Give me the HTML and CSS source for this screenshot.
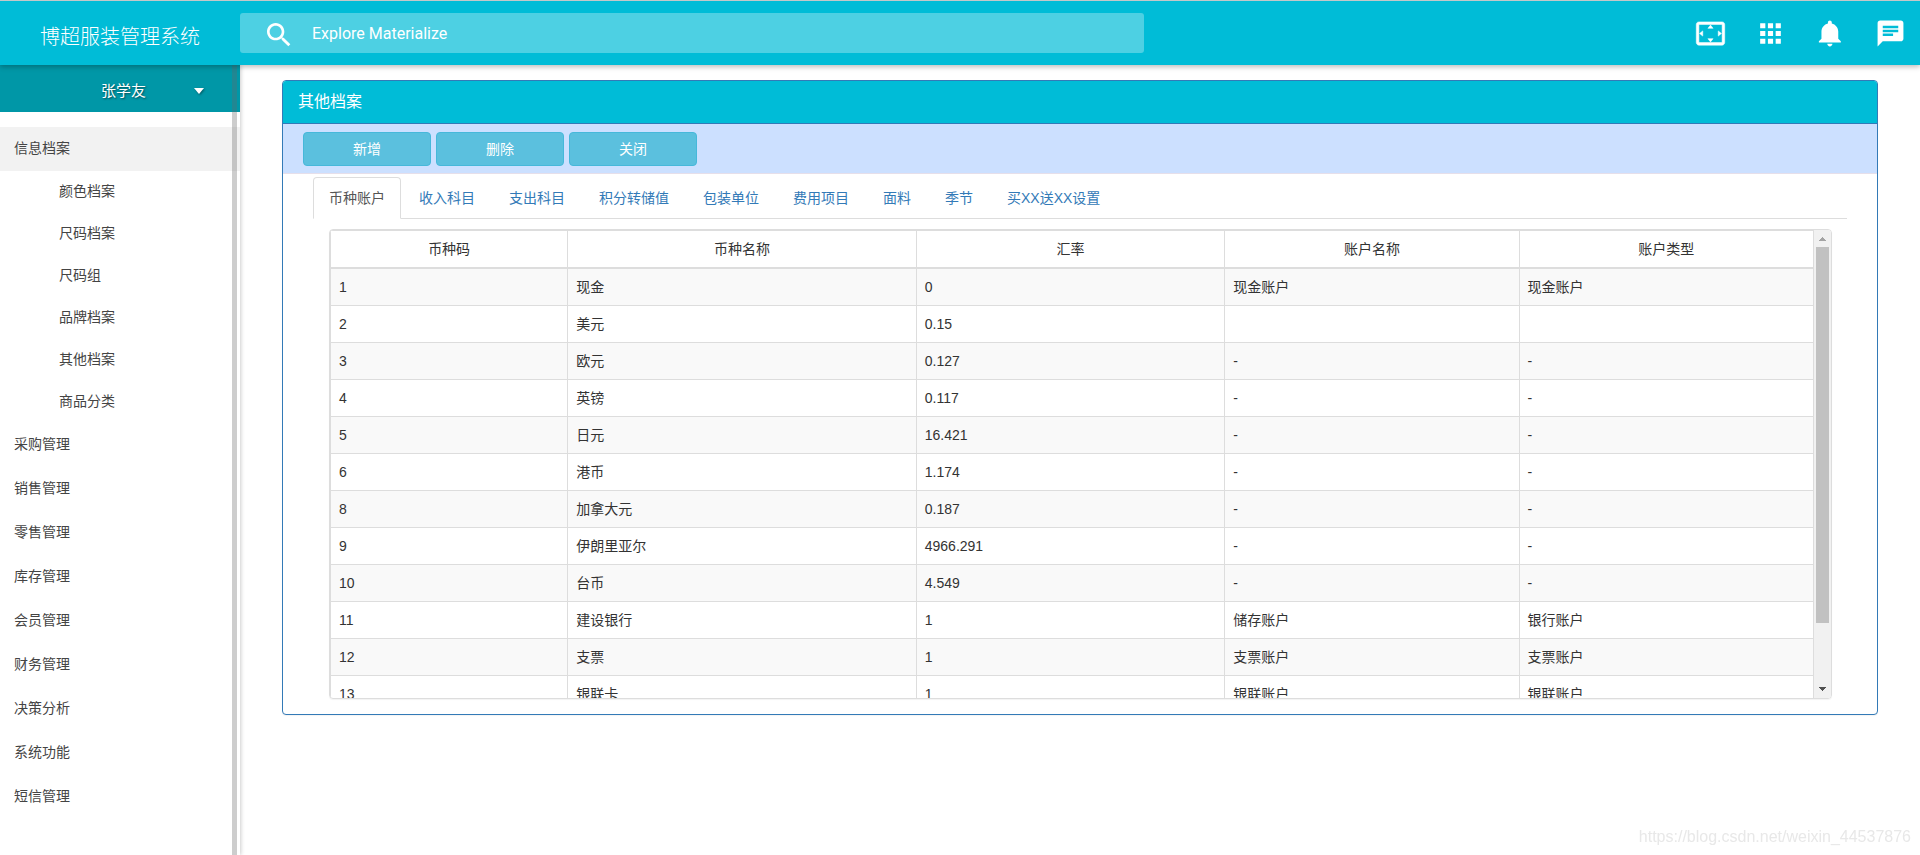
FILE: index.html
```html
<!DOCTYPE html>
<html lang="zh-CN">
<head>
<meta charset="utf-8">
<title>博超服装管理系统</title>
<link rel="stylesheet" href="styles.css">
</head>
<body>
<header class="topbar">
  <a class="brand" href="#">博超服装管理系统</a>
  <form class="search">
    <svg class="search-icon" viewBox="0 0 24 24" aria-hidden="true"><path d="M15.5 14h-.79l-.28-.27C15.41 12.59 16 11.11 16 9.5 16 5.91 13.09 3 9.5 3S3 5.91 3 9.5 5.91 16 9.5 16c1.61 0 3.09-.59 4.23-1.57l.27.28v.79l5 4.99L20.49 19l-4.99-5zm-6 0C7.01 14 5 11.99 5 9.5S7.01 5 9.5 5 14 7.01 14 9.5 11.99 14 9.5 14z"/></svg>
    <input class="search-input" type="text" placeholder="Explore Materialize" aria-label="Explore Materialize">
  </form>
  <nav class="actions">
    <button class="action" type="button" aria-label="全屏"><svg class="overscan" viewBox="0 0 24 24"><path d="M12.01 5.5L10 8h4l-1.99-2.5zM18 10v4l2.5-1.99L18 10zM6 10l-2.5 2.01L6 14v-4zm8 6h-4l2.01 2.5L14 16zm7-13H3c-1.1 0-2 .9-2 2v14c0 1.1.9 2 2 2h18c1.1 0 2-.9 2-2V5c0-1.1-.9-2-2-2zm0 16.01H3V4.99h18v14.02z"/></svg></button>
    <button class="action" type="button" aria-label="应用"><svg viewBox="0 0 24 24"><path d="M4 8h4V4H4v4zm6 12h4v-4h-4v4zm-6 0h4v-4H4v4zm0-6h4v-4H4v4zm6 0h4v-4h-4v4zm6-10v4h4V4h-4zm-6 4h4V4h-4v4zm6 6h4v-4h-4v4zm0 6h4v-4h-4v4z"/></svg></button>
    <button class="action" type="button" aria-label="通知"><svg viewBox="0 0 24 24"><path d="M11.5 22c1.1 0 2-.9 2-2h-4c0 1.1.9 2 2 2zm6.5-6v-5.500c0-3.070-2.130-5.640-5-6.320V3.500c0-.830-.670-1.500-1.500-1.500S10 2.670 10 3.500v.680c-2.870.680-5 3.250-5 6.320V16l-2 2v1h17v-1l-2-2z"/></svg></button>
    <button class="action" type="button" aria-label="消息"><svg viewBox="0 0 24 24"><path d="M20 2H4c-1.100 0-1.990.9-1.990 2L2 22l4-4h14c1.100 0 2-.9 2-2V4c0-1.100-.9-2-2-2zM6 9h12v2H6V9zm8 5H6v-2h8v2zm4-6H6V6h12v2z"/></svg></button>
  </nav>
</header>
<div class="layout">
  <aside class="sidebar">
    <button class="user" type="button">
      <span class="user-name">张学友</span>
      <svg class="caret" viewBox="0 0 10 6" aria-hidden="true"><path d="M0 0h10L5 6z"/></svg>
    </button>
    <ul class="menu">
      <li><a class="menu-link active" href="#">信息档案</a>
        <ul class="submenu">
          <li><a class="sub-link" href="#">颜色档案</a></li>
          <li><a class="sub-link" href="#">尺码档案</a></li>
          <li><a class="sub-link" href="#">尺码组</a></li>
          <li><a class="sub-link" href="#">品牌档案</a></li>
          <li><a class="sub-link" href="#">其他档案</a></li>
          <li><a class="sub-link" href="#">商品分类</a></li>
        </ul>
      </li>
      <li><a class="menu-link" href="#">采购管理</a></li>
      <li><a class="menu-link" href="#">销售管理</a></li>
      <li><a class="menu-link" href="#">零售管理</a></li>
      <li><a class="menu-link" href="#">库存管理</a></li>
      <li><a class="menu-link" href="#">会员管理</a></li>
      <li><a class="menu-link" href="#">财务管理</a></li>
      <li><a class="menu-link" href="#">决策分析</a></li>
      <li><a class="menu-link" href="#">系统功能</a></li>
      <li><a class="menu-link" href="#">短信管理</a></li>
    </ul>
    <div class="side-rail"></div>
  </aside>
  <main class="content">
    <section class="panel">
      <h1 class="panel-title">其他档案</h1>
      <div class="toolbar">
        <button class="btn" type="button">新增</button>
        <button class="btn" type="button">删除</button>
        <button class="btn" type="button">关闭</button>
      </div>
      <div class="panel-body">
        <nav class="tabs">
          <a class="tab current" href="#">币种账户</a>
          <a class="tab" href="#">收入科目</a>
          <a class="tab" href="#">支出科目</a>
          <a class="tab" href="#">积分转储值</a>
          <a class="tab" href="#">包装单位</a>
          <a class="tab" href="#">费用项目</a>
          <a class="tab" href="#">面料</a>
          <a class="tab" href="#">季节</a>
          <a class="tab" href="#">买XX送XX设置</a>
        </nav>
        <div class="table-box">
          <div class="table-scroll">
            <table class="grid">
              <colgroup><col class="c-code"><col class="c-name"><col class="c-rate"><col class="c-acct"><col class="c-type"></colgroup>
              <thead><tr><th>币种码</th><th>币种名称</th><th>汇率</th><th>账户名称</th><th>账户类型</th></tr></thead>
              <tbody>
                <tr><td>1</td><td>现金</td><td>0</td><td>现金账户</td><td>现金账户</td></tr>
                <tr><td>2</td><td>美元</td><td>0.15</td><td></td><td></td></tr>
                <tr><td>3</td><td>欧元</td><td>0.127</td><td>-</td><td>-</td></tr>
                <tr><td>4</td><td>英镑</td><td>0.117</td><td>-</td><td>-</td></tr>
                <tr><td>5</td><td>日元</td><td>16.421</td><td>-</td><td>-</td></tr>
                <tr><td>6</td><td>港币</td><td>1.174</td><td>-</td><td>-</td></tr>
                <tr><td>8</td><td>加拿大元</td><td>0.187</td><td>-</td><td>-</td></tr>
                <tr><td>9</td><td>伊朗里亚尔</td><td>4966.291</td><td>-</td><td>-</td></tr>
                <tr><td>10</td><td>台币</td><td>4.549</td><td>-</td><td>-</td></tr>
                <tr><td>11</td><td>建设银行</td><td>1</td><td>储存账户</td><td>银行账户</td></tr>
                <tr><td>12</td><td>支票</td><td>1</td><td>支票账户</td><td>支票账户</td></tr>
                <tr><td>13</td><td>银联卡</td><td>1</td><td>银联账户</td><td>银联账户</td></tr>
              </tbody>
            </table>
          </div>
          <div class="scrollbar" aria-hidden="true">
            <svg class="arrow up" viewBox="0 0 17 17"><path d="M5 11h7v-1h-1v-1h-1v-1h-1v-1h-1v1h-1v1h-1v1h-1z"/></svg>
            <div class="track"><div class="thumb"></div></div>
            <svg class="arrow down" viewBox="0 0 17 17"><path d="M5 6h7v1h-1v1h-1v1h-1v1h-1v-1h-1v-1h-1v-1h-1z"/></svg>
          </div>
        </div>
      </div>
    </section>
  </main>
</div>
<div class="watermark">https://blog.csdn.net/weixin_44537876</div>
</body>
</html>
```

FILE: styles.css
```css
* { box-sizing: border-box; }

body {
  margin: 0;
  min-height: 100vh;
  display: flex;
  flex-direction: column;
  background: #fff;
  color: #333;
  font: 14px/20px "Liberation Sans", "Noto Sans CJK SC", sans-serif;
}

a { text-decoration: none; color: inherit; }
ul { list-style: none; margin: 0; padding: 0; }
button, input { font: inherit; border: 0; margin: 0; padding: 0; background: none; }

.topbar {
  position: relative;
  z-index: 2;
  display: flex;
  align-items: center;
  height: 65px;
  border-top: 1px solid #c4c8c9;
  background: #00bcd7;
  box-shadow: 0 2px 5px rgba(0, 0, 0, .26);
}

.brand {
  width: 240px;
  padding-top: 7px;
  padding-left: 40px;
  color: #fff;
  font-size: 20px;
  font-weight: 300;
  line-height: 30px;
}

.search {
  display: flex;
  align-items: center;
  flex: 0 1 904px;
  height: 40px;
  padding-left: 23px;
  border-radius: 3px;
  background: #4dd0e3;
}

.search-icon { width: 32px; height: 32px; margin-top: 4px; fill: #fff; }

.search-input {
  flex: 1;
  margin-left: 17px;
  height: 40px;
  color: #fff;
  font: 400 16px/24px Roboto, sans-serif;
  outline: 0;
}
.search-input::placeholder { color: #fff; opacity: 1; }

.actions { display: flex; margin-left: auto; }
.action { width: 60px; height: 64px; display: grid; place-items: center; }
.action svg { width: 31px; height: 31px; fill: #fff; }
.action .overscan { stroke: #fff; stroke-width: .4; }

.layout { display: flex; flex: 1; }

.sidebar {
  position: relative;
  flex: 0 0 240px;
  background: #fff;
  box-shadow: 1px 0 4px rgba(0, 0, 0, .2);
}

.user {
  display: flex;
  align-items: center;
  width: 100%;
  height: 47px;
  padding: 4px 36px 0 101px;
  background: #0097a7;
  color: #fff;
  font-size: 15px;
  text-shadow: 1px 1px 2px rgba(0, 0, 0, .5);
}
.caret {
  width: 10px;
  height: 6px;
  margin-left: auto;
  fill: #fff;
  filter: drop-shadow(1px 1px 1px rgba(0, 0, 0, .4));
}

.menu { padding-top: 15px; color: #444; }
.menu-link { display: block; padding: 11px 14px 13px; }
.menu-link.active { background: #f2f2f2; }
.sub-link { display: block; padding: 10px 14px 12px 59px; }

.side-rail {
  position: absolute;
  top: 0;
  bottom: 0;
  right: 3px;
  width: 5px;
  background: rgba(102, 102, 102, .33);
}

.content { flex: 1; min-width: 0; padding: 15px 42px; }

.panel {
  border: 1px solid #337ab7;
  border-radius: 4px;
  background: #fff;
  box-shadow: 0 1px 1px rgba(0, 0, 0, .05);
  overflow: hidden;
}

.panel-title {
  margin: 0;
  padding: 11px 15px;
  border-bottom: 1px solid #337ab7;
  background: #00bcd7;
  color: #fff;
  font-size: 16px;
  font-weight: 400;
  line-height: 20px;
}

.toolbar {
  display: flex;
  gap: 5px;
  padding: 8px 20px 7px;
  border-bottom: 1px solid #e6dfea;
  background: #cce0ff;
}
.btn {
  width: 128px;
  height: 34px;
  border: 1px solid #46b8da;
  border-radius: 4px;
  background: #5bc0de;
  color: #fff;
}

.panel-body { padding: 3px 30px 15px; }

.tabs { display: flex; gap: 2px; border-bottom: 1px solid #ddd; }
.tab {
  margin-bottom: -1px;
  padding: 10px 15px;
  border: 1px solid transparent;
  border-radius: 4px 4px 0 0;
  color: #337ab7;
}
.tab.current { border-color: #ddd #ddd #fff; background: #fff; color: #555; }

.table-box {
  display: flex;
  height: 470px;
  margin: 10px 15px 0 16px;
  border: 1px solid #ddd;
  border-radius: 4px;
  box-shadow: 0 1px 1px rgba(0, 0, 0, .05);
  overflow: hidden;
}
.table-scroll { flex: 1; overflow-y: auto; scrollbar-width: none; }

.grid {
  width: 100%;
  table-layout: fixed;
  border-spacing: 0;
  border-top: 1px solid #ddd;
  border-left: 1px solid #ddd;
}
.c-code { width: 16%; }
.c-name { width: 23.5%; }
.c-rate { width: 20.8%; }
.grid th, .grid td {
  padding: 8px;
  border-right: 1px solid #ddd;
  border-bottom: 1px solid #ddd;
}
.grid td { height: 37px; }
.grid th { border-bottom-width: 2px; font-weight: 400; text-align: center; }
.grid tbody tr:nth-child(odd) { background: #f9f9f9; }

.scrollbar { display: flex; flex-direction: column; width: 17px; background: #f1f1f1; }
.arrow { width: 17px; height: 17px; }
.up { fill: #a3a3a3; }
.down { fill: #505050; }
.track { flex: 1; padding: 0 2px; }
.thumb { height: 376px; background: #c1c1c1; }

.watermark {
  position: fixed;
  right: 9px;
  bottom: 8px;
  color: #e8e8e8;
  font-size: 16px;
}
```
